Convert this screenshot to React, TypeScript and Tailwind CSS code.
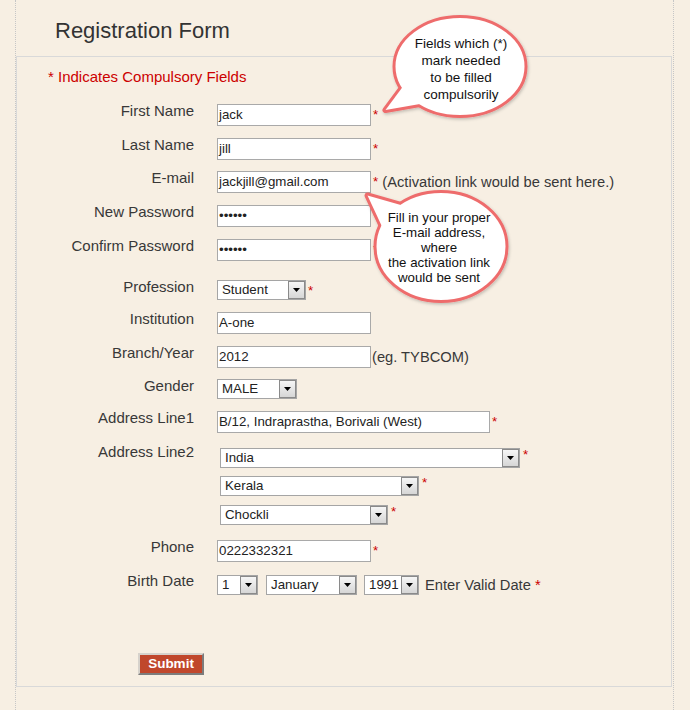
import type { ReactNode } from 'react'

/**
 * Registration form with two callout bubbles
 */

function Star({ sup }: { sup?: boolean }) {
  return (
    <span className={`text-[13.3px] text-[#cc0000] ${sup ? 'ml-[3px] leading-[13px]' : 'ml-[2px] leading-[22px]'}`}>*</span>
  )
}

function Field({ value, w = 'w-[154px]' }: { value: string; w?: string }) {
  return (
    <div className={`flex h-[22px] items-center border border-[#a9a9a9] bg-white pl-[1px] text-[13.3px] text-[#222] whitespace-nowrap ${w}`}>
      {value}
    </div>
  )
}

function Select({ value, w }: { value: string; w: string }) {
  return (
    <div className={`flex h-[20px] items-stretch border border-[#a5a5a5] bg-white ${w}`}>
      <span className="flex-1 pl-[4px] text-[13.3px] leading-[18px] text-[#222] whitespace-nowrap overflow-hidden">{value}</span>
      <span className="flex w-[17px] items-center justify-center border border-[#8a8a8a] bg-gradient-to-b from-[#f6f6f6] to-[#d6d6d6]">
        <svg width="7" height="4" viewBox="0 0 7 4">
          <path d="M0 0h7L3.5 4z" fill="#000" />
        </svg>
      </span>
    </div>
  )
}

function Row({ label, h, children }: { label: string; h: string; children?: ReactNode }) {
  return (
    <div className={`flex items-start ${h}`}>
      <div className="-mt-[1px] w-[177px] shrink-0 text-right text-[15px] leading-[15px] text-[#383838]">{label}</div>
      <div className="ml-[23px] flex items-start">{children}</div>
    </div>
  )
}

function BubbleTop() {
  return (
    <>
      <svg className="absolute left-[370px] top-[5px]" width="170" height="125" viewBox="370 5 170 125">
        <defs>
          <filter id="sh1" x="-20%" y="-20%" width="140%" height="140%">
            <feDropShadow dx="1" dy="1.5" stdDeviation="1.5" floodColor="#000" floodOpacity="0.22" />
          </filter>
        </defs>
        <g filter="url(#sh1)">
          <path d="M410 77 L385.5 110 L430 102.3 Z" fill="#fff" stroke="#ee6c6c" strokeWidth="6" strokeLinejoin="round" />
          <ellipse cx="460" cy="66.5" rx="66" ry="50" fill="#fff" stroke="#ee6c6c" strokeWidth="3" />
          <path d="M410 77 L385.5 110 L430 102.3 Z" fill="#fff" />
        </g>
      </svg>
      <div className="absolute left-[392px] top-[35px] w-[138px] text-center text-[13.5px] leading-[17px] text-[#111]">
        Fields which (*)<br />mark needed<br />to be filled<br />compulsorily
      </div>
    </>
  )
}

function BubbleEmail() {
  return (
    <>
      <svg className="absolute left-[355px] top-[180px]" width="170" height="135" viewBox="355 180 170 135">
        <defs>
          <filter id="sh2" x="-20%" y="-20%" width="140%" height="140%">
            <feDropShadow dx="1" dy="1.5" stdDeviation="1.5" floodColor="#000" floodOpacity="0.22" />
          </filter>
        </defs>
        <g filter="url(#sh2)">
          <path d="M420 210.5 L367.5 195.5 L392 248 Z" fill="#fff" stroke="#ee6c6c" strokeWidth="6" strokeLinejoin="round" />
          <ellipse cx="441" cy="246.5" rx="66" ry="55" fill="#fff" stroke="#ee6c6c" strokeWidth="3" />
          <path d="M420 210.5 L367.5 195.5 L392 248 Z" fill="#fff" />
        </g>
      </svg>
      <div className="absolute left-[370px] top-[210px] w-[138px] text-center text-[13.3px] leading-[15px] text-[#111]">
        Fill in your proper<br />E-mail address,<br />where<br />the activation link<br />would be sent
      </div>
    </>
  )
}

export default function App() {
  return (
    <div className="relative min-h-[710px] bg-[#f7efe3] font-['Liberation_Sans',Arial,sans-serif]">
      <div className="ml-[15px] min-h-[710px] w-[659px] border-x border-dotted border-[#c6c6c6]">
        {/* Header */}
        <div className="h-[56px] pl-[39px] pt-[18px]">
          <h1 className="text-[22px] leading-[26px] text-[#333]">Registration Form</h1>
        </div>

        {/* Form box */}
        <div className="mr-[1px] border border-[#d9d9d9] pb-[11px]">
          <p className="pl-[31px] pt-[12px] text-[15px] leading-[15px] text-[#cc0000]">* Indicates Compulsory Fields</p>

          <div className="mt-[20px]">
            <Row label="First Name" h="h-[34px]">
              <Field value="jack" />
              <Star />
            </Row>
            <Row label="Last Name" h="h-[33px]">
              <Field value="jill" />
              <Star />
            </Row>
            <Row label="E-mail" h="h-[34px]">
              <Field value="jackjill@gmail.com" />
              <div className="flex h-[22px] items-center whitespace-nowrap">
                <span className="ml-[2px] text-[13.3px] text-[#cc0000]">*</span>
                <span className="text-[14.7px] text-[#383838]">&nbsp;(Activation link would be sent here.)</span>
              </div>
            </Row>
            <Row label="New Password" h="h-[34px]">
              <Field value="••••••" />
              <Star />
            </Row>
            <Row label="Confirm Password" h="h-[41px]">
              <Field value="••••••" />
              <Star />
            </Row>
            <Row label="Profession" h="h-[32px]">
              <Select value="Student" w="w-[89px]" />
              <Star />
            </Row>
            <Row label="Institution" h="h-[34px]">
              <Field value="A-one" />
            </Row>
            <Row label="Branch/Year" h="h-[33px]">
              <Field value="2012" />
              <span className="ml-[1px] text-[14.7px] leading-[22px] text-[#383838]">(eg. TYBCOM)</span>
            </Row>
            <Row label="Gender" h="h-[32px]">
              <Select value="MALE" w="w-[80px]" />
            </Row>
            <Row label="Address Line1" h="h-[34px]">
              <Field value="B/12, Indraprastha, Borivali (West)" w="w-[273px]" />
              <Star />
            </Row>
            <Row label="Address Line2" h="h-[95px]">
              <div className="flex flex-col pl-[3px] pt-[3px]">
                <div className="flex items-start">
                  <Select value="India" w="w-[300px]" />
                  <Star sup />
                </div>
                <div className="mt-[8px] flex items-start">
                  <Select value="Kerala" w="w-[199px]" />
                  <Star sup />
                </div>
                <div className="mt-[9px] flex items-start">
                  <Select value="Chockli" w="w-[168px]" />
                  <Star sup />
                </div>
              </div>
            </Row>
            <Row label="Phone" h="h-[34px]">
              <Field value="0222332321" />
              <Star />
            </Row>
            <Row label="Birth Date" h="h-[79px]">
              <div className="flex items-center">
                <Select value="1" w="w-[41px]" />
                <div className="ml-[8px]">
                  <Select value="January" w="w-[91px]" />
                </div>
                <div className="ml-[7px]">
                  <Select value="1991" w="w-[55px]" />
                </div>
                <span className="ml-[6px] text-[14.7px] text-[#383838] whitespace-nowrap">
                  Enter Valid Date <span className="text-[#cc0000]">*</span>
                </span>
              </div>
            </Row>
          </div>

          <button className="ml-[121px] block h-[22px] w-[66px] border-2 border-t-[#d6d2cc] border-l-[#d6d2cc] border-r-[#7c7c7c] border-b-[#7c7c7c] bg-[#c0472c] text-[13.5px] font-bold leading-[18px] text-white">
            Submit
          </button>
        </div>
      </div>

      <BubbleTop />
      <BubbleEmail />
    </div>
  )
}
